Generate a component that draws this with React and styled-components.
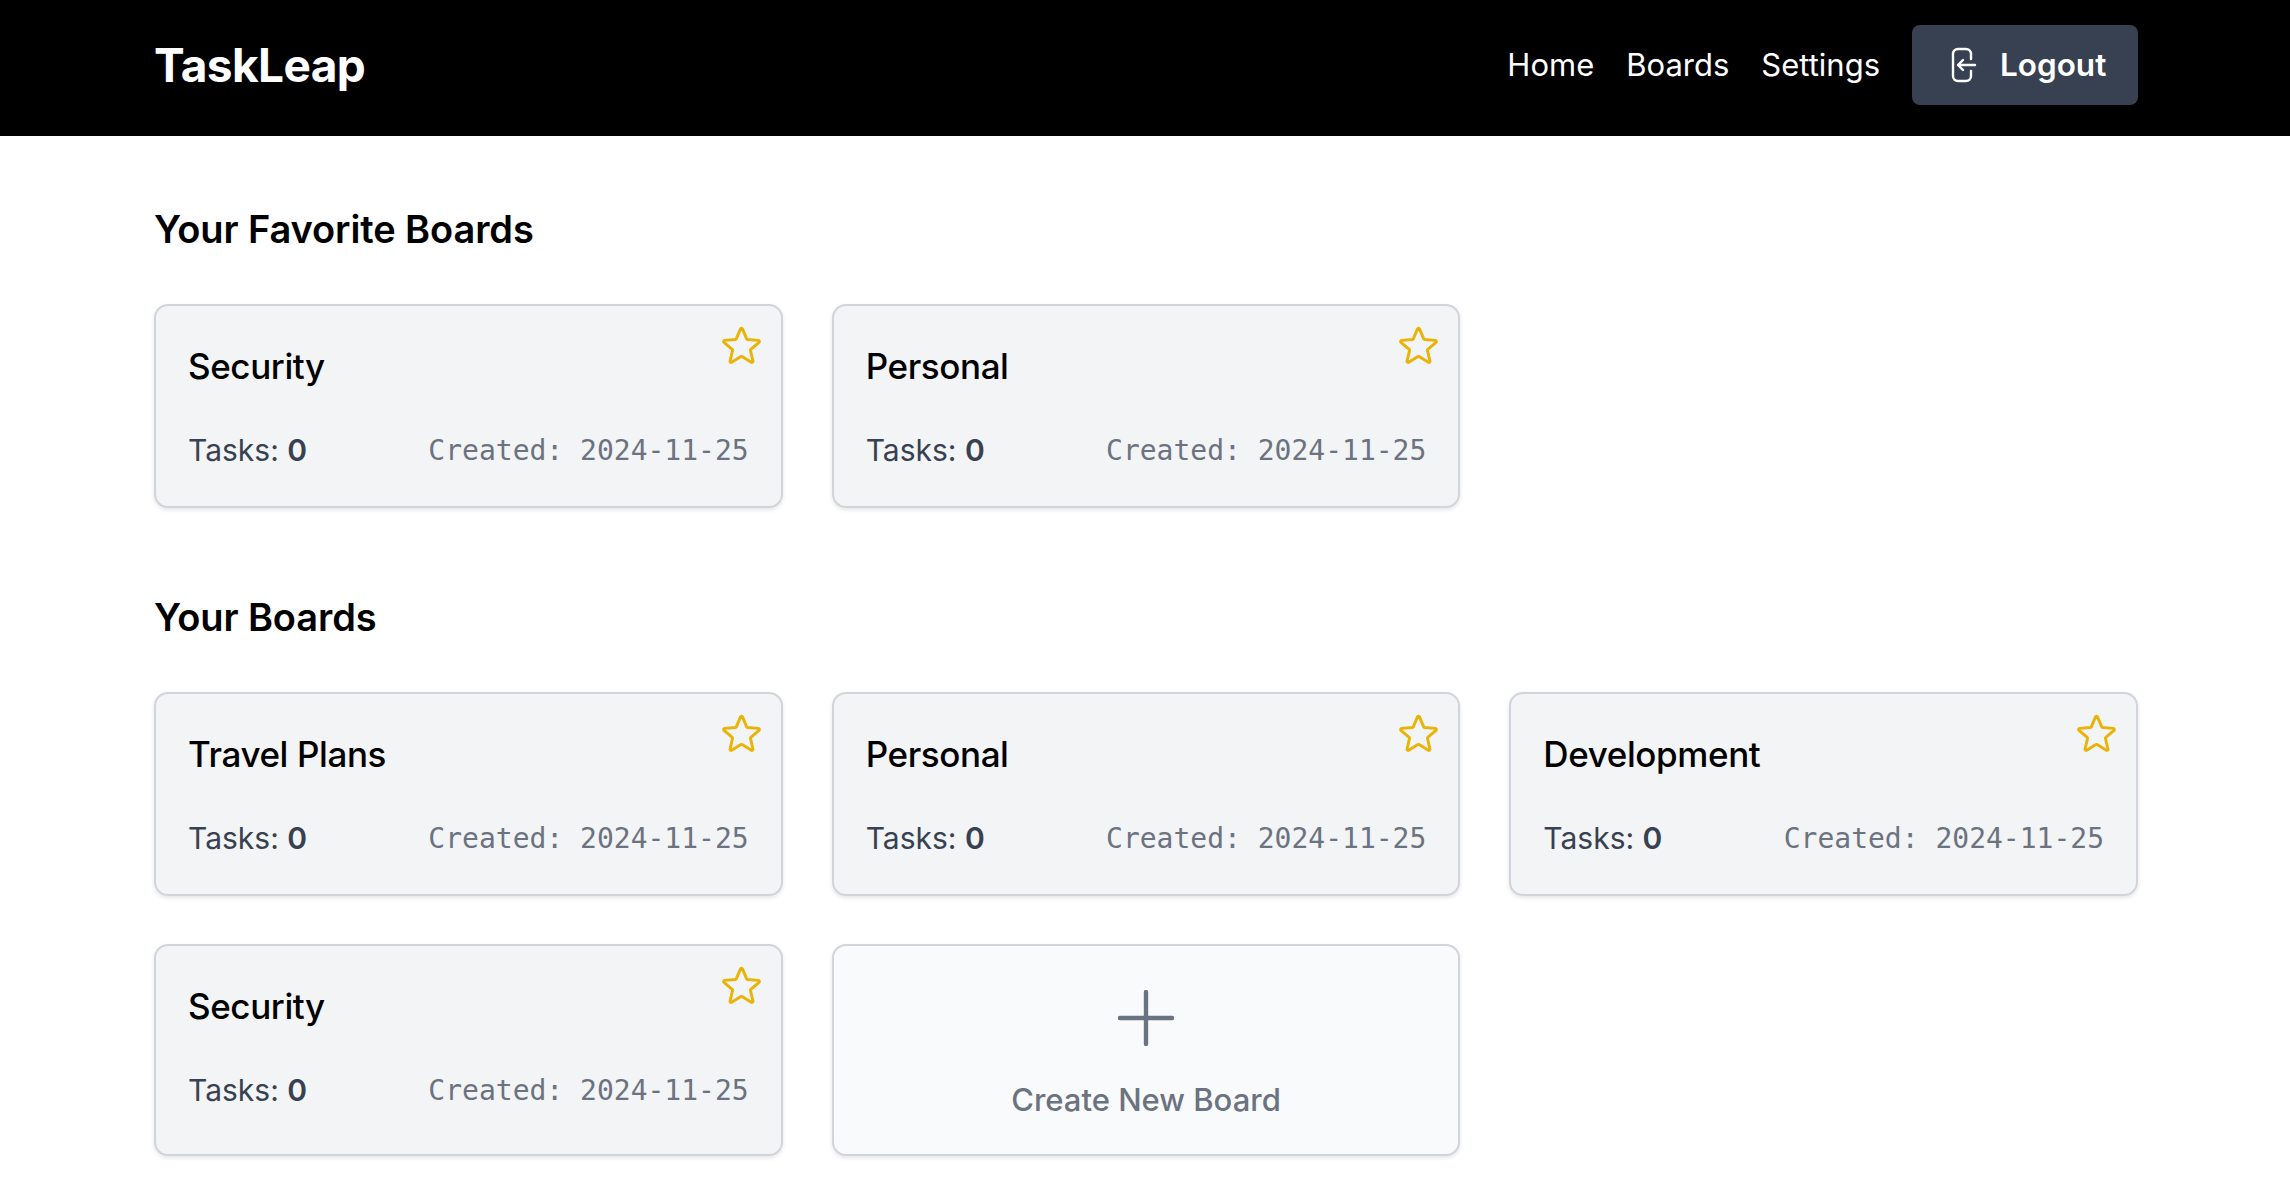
import React from 'react';
import styled, { createGlobalStyle } from 'styled-components';
import { HiOutlineStar } from 'react-icons/hi2';

const favorites = [{ name: 'Security' }, { name: 'Personal' }];
const boards = [
  { name: 'Travel Plans' },
  { name: 'Personal' },
  { name: 'Development' },
  { name: 'Security' },
];

const GlobalStyle = createGlobalStyle`
  html, body {
    margin: 0;
    background: #fff;
    font-family: Inter, "Noto Sans", sans-serif;
  }
  * {
    box-sizing: border-box;
  }
`;

const Header = styled.header`
  height: 136px;
  background: #000;
  color: #fff;
  padding: 0 152px 7px 154px;
  display: flex;
  align-items: center;
  justify-content: space-between;
`;

const Logo = styled.div`
  font-size: 46px;
  font-weight: 700;
  letter-spacing: -0.6px;
`;

const Nav = styled.nav`
  display: flex;
  align-items: center;
  gap: 32px;
`;

const NavLink = styled.a`
  font-size: 31px;
  color: #fff;
`;

const LogoutButton = styled.button`
  width: 226px;
  height: 80px;
  padding: 0 0 0 39px;
  border: 0;
  border-radius: 8px;
  background: #374151;
  color: #fff;
  font: 600 31.5px Inter, sans-serif;
  display: flex;
  align-items: center;
  gap: 23px;
`;

const Main = styled.main`
  padding: 0 152px 0 154px;
`;

const SectionTitle = styled.h2`
  margin: 0;
  padding: 69px 0 51px;
  font-size: 38px;
  line-height: 48px;
  font-weight: 600;
  letter-spacing: -0.1px;
  color: #000;
`;

const Grid = styled.div`
  display: grid;
  grid-template-columns: repeat(3, 1fr);
  gap: 48px 49px;
  padding-bottom: 16px;
`;

const Card = styled.div`
  position: relative;
  min-height: 204px;
  padding: 36px 32px 34px;
  background: ${(p) => (p.$create ? '#f9fafb' : '#f3f4f6')};
  border: 2.5px solid #d1d5db;
  border-radius: 14px;
  box-shadow: 0 2px 4px rgba(0, 0, 0, 0.1);
`;

const CardTitle = styled.h3`
  margin: 0 0 42px;
  font-size: 35px;
  line-height: 48px;
  font-weight: 500;
  letter-spacing: -0.4px;
  color: #000;
`;

const StarButton = styled.span`
  position: absolute;
  top: 16px;
  right: 16px;
  display: flex;
  color: #eab308;
  font-size: 47px;
`;

const CardFooter = styled.div`
  display: flex;
  align-items: center;
  justify-content: space-between;
  height: 36px;
`;

const Tasks = styled.span`
  font-size: 30px;
  color: #374151;
  b {
    font-weight: 600;
  }
`;

const Created = styled.span`
  font-family: "DejaVu Sans Mono", monospace;
  font-size: 28px;
  color: #6b7280;
`;

const CreateCard = styled(Card)`
  display: flex;
  flex-direction: column;
  align-items: center;
  gap: 35px;
  padding: 44px 32px 35px;
`;

const CreateLabel = styled.span`
  font-size: 31px;
  line-height: 38px;
  font-weight: 500;
  color: #6b7280;
`;

const LogoutIcon = () => (
  <svg width="26" height="36" viewBox="0 0 26 36" fill="none" stroke="#fff" strokeWidth="2.4" strokeLinecap="round" strokeLinejoin="round">
    <path d="M20 12V7a5 5 0 0 0-5-5H7a5 5 0 0 0-5 5v22a5 5 0 0 0 5 5h8a5 5 0 0 0 5-5v-5" />
    <path d="M24 18H7M12 13l-5 5 5 5" />
  </svg>
);

const PlusIcon = () => (
  <svg width="56" height="56" viewBox="0 0 56 56" fill="none" stroke="#6b7280" strokeWidth="4.4" strokeLinecap="round">
    <path d="M28 2v52M2 28h52" />
  </svg>
);

const BoardCard = ({ name }) => (
  <Card>
    <CardTitle>{name}</CardTitle>
    <StarButton>
      <HiOutlineStar />
    </StarButton>
    <CardFooter>
      <Tasks>
        Tasks: <b>0</b>
      </Tasks>
      <Created>Created: 2024-11-25</Created>
    </CardFooter>
  </Card>
);

const App = () => (
  <>
    <GlobalStyle />
    <Header>
      <Logo>TaskLeap</Logo>
      <Nav>
        <NavLink>Home</NavLink>
        <NavLink>Boards</NavLink>
        <NavLink>Settings</NavLink>
        <LogoutButton>
          <LogoutIcon />
          Logout
        </LogoutButton>
      </Nav>
    </Header>
    <Main>
      <SectionTitle>Your Favorite Boards</SectionTitle>
      <Grid>
        {favorites.map((b, i) => (
          <BoardCard key={i} name={b.name} />
        ))}
      </Grid>
      <SectionTitle>Your Boards</SectionTitle>
      <Grid>
        {boards.map((b, i) => (
          <BoardCard key={i} name={b.name} />
        ))}
        <CreateCard $create>
          <PlusIcon />
          <CreateLabel>Create New Board</CreateLabel>
        </CreateCard>
      </Grid>
    </Main>
  </>
);

export default App;
